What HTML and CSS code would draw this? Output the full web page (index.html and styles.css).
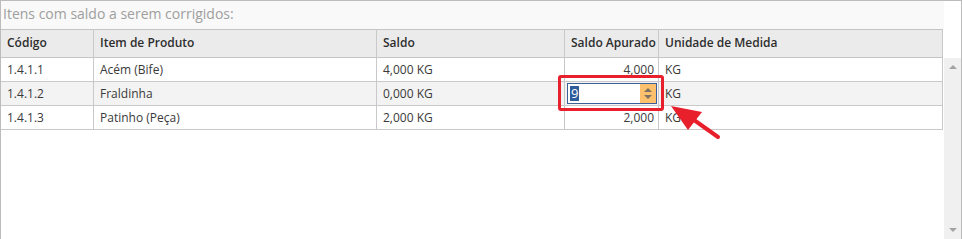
FILE: index.html
```html
<!DOCTYPE html>
<html lang="pt-BR">
<head>
    <meta charset="UTF-8">
    <title>Itens com saldo a serem corrigidos</title>
    <link rel="stylesheet" href="styles.css">
</head>
<body>
    <div class="panel">
        <div class="main">
            <div class="panel-title">Itens com saldo a serem corrigidos:</div>

            <div class="grid">
                <div class="cell head">Código</div>
                <div class="cell head">Item de Produto</div>
                <div class="cell head">Saldo</div>
                <div class="cell head">Saldo Apurado</div>
                <div class="cell head">Unidade de Medida</div>

                <div class="cell">1.4.1.1</div>
                <div class="cell">Acém (Bife)</div>
                <div class="cell">4,000 KG</div>
                <div class="cell num">4,000</div>
                <div class="cell">KG</div>

                <div class="cell alt">1.4.1.2</div>
                <div class="cell alt">Fraldinha</div>
                <div class="cell alt">0,000 KG</div>
                <div class="cell alt edit">
                    <div class="spin">
                        <span class="spin-value"><span class="sel">9</span></span>
                        <span class="spin-btns">
                            <span class="tri up"></span>
                            <span class="tri down"></span>
                        </span>
                    </div>
                </div>
                <div class="cell alt">KG</div>

                <div class="cell">1.4.1.3</div>
                <div class="cell">Patinho (Peça)</div>
                <div class="cell">2,000 KG</div>
                <div class="cell num">2,000</div>
                <div class="cell">KG</div>
            </div>
        </div>

        <div class="scrollbar">
            <span class="arrow up"></span>
            <span class="arrow down"></span>
        </div>
    </div>

    <!-- annotation drawn over the screenshot -->
    <div class="mark"></div>
    <svg class="pointer" width="962" height="239" viewBox="0 0 962 239">
        <line x1="694" y1="120" x2="718" y2="137" stroke="#e8202c" stroke-width="4" stroke-linecap="round"/>
        <polygon points="671,106 688,130 702,112" fill="#e8202c"/>
    </svg>
</body>
</html>
```

FILE: styles.css
```css
* {
    margin: 0;
    padding: 0;
    box-sizing: border-box;
}

body {
    width: 962px;
    height: 239px;
    overflow: hidden;
    background: #fff;
    font-family: "Open Sans", "Noto Sans", sans-serif;
    font-size: 12px;
    color: #3a3a3a;
}

.panel {
    display: flex;
    width: 962px;
    height: 250px;
    border: 1px solid #bcbcbc;
    border-bottom: none;
}

.main {
    width: 943px;
}

.panel-title {
    height: 28px;
    padding: 3px 2px;
    background: #f9f9f9;
    color: #9e9e9e;
    font-size: 14px;
    line-height: 20px;
}

.grid {
    display: grid;
    grid-template-columns: 93px 283px 188px 94px 284px;
    grid-template-rows: 29px;
    grid-auto-rows: 24px;
}

.cell {
    padding: 0 6px;
    border-right: 1px solid #c9c9c9;
    border-bottom: 1px solid #c9c9c9;
    line-height: 23px;
    white-space: nowrap;
    overflow: hidden;
    background: #fff;
}

.cell.head {
    border-top: 1px solid #c4c4c4;
    border-bottom-color: #c4c4c4;
    background: #ebebeb;
    font-weight: 600;
    color: #2e2e2e;
    line-height: 26px;
}

.cell.alt {
    background: #f3f3f3;
}

.cell.num {
    text-align: right;
    padding-right: 4px;
}

.cell.edit {
    padding: 1px 0 0 2px;
}

.spin {
    display: flex;
    width: 90px;
    height: 21px;
    border: 1px solid #3b5f96;
    background: #fff;
}

.spin-value {
    flex: 1;
    padding-left: 2px;
    line-height: 18px;
    font-size: 13px;
}

.sel {
    display: inline-block;
    padding: 0 1px;
    line-height: 15px;
    background: #2f5c9a;
    color: #fff;
}

.spin-btns {
    display: flex;
    flex-direction: column;
    justify-content: center;
    align-items: center;
    gap: 3px;
    width: 16px;
    background: #fdc06c;
}

.tri {
    width: 0;
    height: 0;
    border-left: 4px solid transparent;
    border-right: 4px solid transparent;
}

.tri.up {
    border-bottom: 4px solid #7d7263;
}

.tri.down {
    border-top: 4px solid #7d7263;
}

.scrollbar {
    display: flex;
    flex-direction: column;
    justify-content: space-between;
    align-items: center;
    width: 17px;
    margin-top: 57px;
    height: 183px;
    padding: 7px 0 9px;
    background: #f0f0f0;
}

.arrow {
    width: 0;
    height: 0;
    border-left: 4px solid transparent;
    border-right: 4px solid transparent;
}

.arrow.up {
    border-bottom: 4px solid #a3a3a3;
}

.arrow.down {
    border-top: 4px solid #a3a3a3;
}

.mark {
    position: absolute;
    left: 558px;
    top: 75px;
    width: 106px;
    height: 36px;
    border: 3px solid #e8202c;
    border-radius: 3px;
}

.pointer {
    position: absolute;
    left: 0;
    top: 0;
}
```
